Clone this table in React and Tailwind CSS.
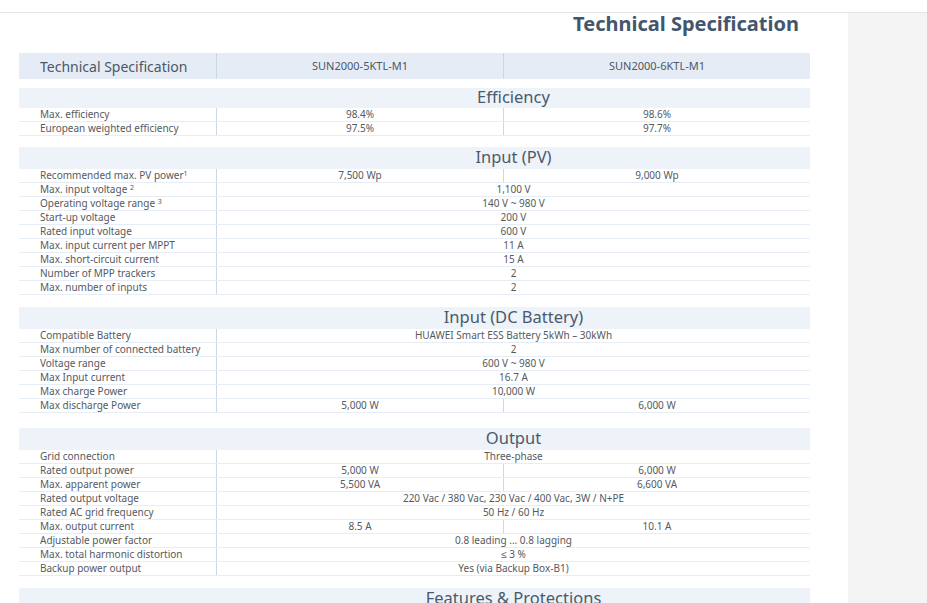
import React from "react";

const sections = [
  {
    title: "Efficiency",
    gap: "mt-[9px]",
    head: "h-[20px]",
    rows: [
      ["Max. efficiency", "98.4%", "98.6%"],
      ["European weighted efficiency", "97.5%", "97.7%"],
    ],
  },
  {
    title: "Input (PV)",
    gap: "mt-[11px]",
    head: "h-[22px]",
    rows: [
      [<>Recommended max. PV power<sup className="text-[7px]">1</sup></>, "7,500 Wp", "9,000 Wp"],
      [<>Max. input voltage <sup className="text-[7px]">2</sup></>, "1,100 V"],
      [<>Operating voltage range <sup className="text-[7px]">3</sup></>, "140 V ~ 980 V"],
      ["Start-up voltage", "200 V"],
      ["Rated input voltage", "600 V"],
      ["Max. input current per MPPT", "11 A"],
      ["Max. short-circuit current", "15 A"],
      ["Number of MPP trackers", "2"],
      ["Max. number of inputs", "2"],
    ],
  },
  {
    title: "Input (DC Battery)",
    gap: "mt-[12px]",
    head: "h-[22px]",
    rows: [
      ["Compatible Battery", "HUAWEI Smart ESS Battery 5kWh – 30kWh"],
      ["Max number of connected battery", "2"],
      ["Voltage range", "600 V ~ 980 V"],
      ["Max Input current", "16.7 A"],
      ["Max charge Power", "10,000 W"],
      ["Max discharge Power", "5,000 W", "6,000 W"],
    ],
  },
  {
    title: "Output",
    gap: "mt-[15px]",
    head: "h-[22px]",
    rows: [
      ["Grid connection", "Three-phase"],
      ["Rated output power", "5,000 W", "6,000 W"],
      ["Max. apparent power", "5,500 VA", "6,600 VA"],
      ["Rated output voltage", "220 Vac / 380 Vac, 230 Vac / 400 Vac, 3W / N+PE"],
      ["Rated AC grid frequency", "50 Hz / 60 Hz"],
      ["Max. output current", "8.5 A", "10.1 A"],
      ["Adjustable power factor", "0.8 leading ... 0.8 lagging"],
      ["Max. total harmonic distortion", "≤ 3 %"],
      ["Backup power output", "Yes (via Backup Box-B1)"],
    ],
  },
  {
    title: "Features & Protections",
    gap: "mt-[12px]",
    head: "h-[22px]",
    rows: [],
  },
];

function Row({ label, a, b }) {
  return (
    <div className="grid grid-cols-[198px_287px_1fr] h-[14px] border-b border-[#e6edf5] text-[10px] leading-[13px] text-[#555a5f]">
      <div className="pl-[21px] border-r border-[#cad8e7] whitespace-nowrap">{label}</div>
      {b === undefined ? (
        <div className="col-span-2 text-center whitespace-nowrap">{a}</div>
      ) : (
        <>
          <div className="text-center border-r border-[#cad8e7]">{a}</div>
          <div className="text-center">{b}</div>
        </>
      )}
    </div>
  );
}

function Section({ title, gap, head, rows }) {
  return (
    <div className={gap}>
      <div className={`grid grid-cols-[198px_1fr] bg-[#eef3f9] ${head}`}>
        <div></div>
        <div className="flex items-center justify-center pb-[3px] text-[16.5px] leading-[18px] text-[#4a5a6b]">
          {title}
        </div>
      </div>
      {rows.map((r, i) => (
        <Row key={i} label={r[0]} a={r[1]} b={r[2]} />
      ))}
    </div>
  );
}

export default function App() {
  return (
    <div className="min-h-screen bg-white font-['Noto_Sans',sans-serif]">
      <div className="h-[13px] border-b border-[#e4e4e4]"></div>
      <div className="flex">
        <div className="w-[848px] pl-[19px] pb-6">
          <div className="w-[791px] pr-[11px] text-right text-[20px] leading-[22px] font-bold text-[#44566b]">
            Technical Specification
          </div>

          <div className="w-[791px] mt-[18px]">
            <div className="grid grid-cols-[198px_287px_1fr] h-[26px] bg-[#e6ecf5] items-stretch">
              <div className="pl-[21px] flex items-center border-r border-[#c9d7e7] text-[14px] text-[#4a5868]">
                Technical Specification
              </div>
              <div className="flex items-center justify-center border-r border-[#c9d7e7] text-[11px] text-[#4a5868]">
                SUN2000-5KTL-M1
              </div>
              <div className="flex items-center justify-center text-[11px] text-[#4a5868]">
                SUN2000-6KTL-M1
              </div>
            </div>

            {sections.map((s) => (
              <Section key={s.title} {...s} />
            ))}
          </div>
        </div>
        <div className="flex-1 bg-[#f4f4f4]"></div>
      </div>
    </div>
  );
}
